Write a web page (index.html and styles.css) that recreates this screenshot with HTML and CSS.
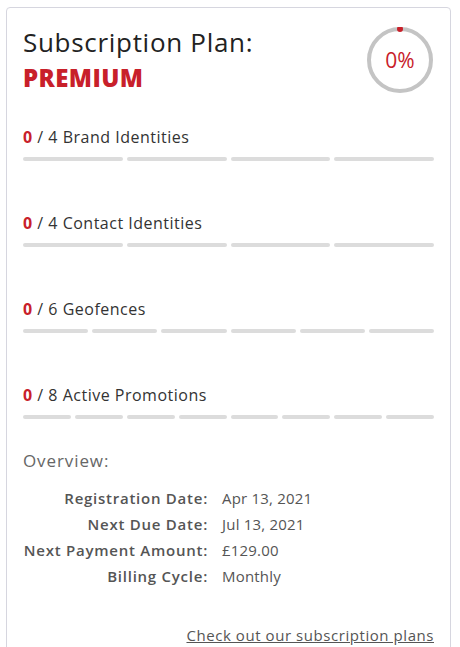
FILE: index.html
```html
<!DOCTYPE html>
<html>
<head>
<meta charset="utf-8">
<link rel="stylesheet" href="styles.css">
</head>
<body>
<div class="card">
  <div class="header">
    <div class="title">
      <div class="plan-label">Subscription Plan:</div>
      <div class="plan-name">PREMIUM</div>
    </div>
    <div class="gauge">
      <svg width="66" height="66" viewBox="0 0 66 66">
        <circle cx="33" cy="33" r="31" fill="none" stroke="#c4c4c4" stroke-width="4"/>
        <circle cx="33" cy="2" r="3" fill="#c8202a"/>
      </svg>
      <span class="gauge-text">0%</span>
    </div>
  </div>

  <div class="usage">
    <div class="usage-text"><span class="used">0</span> / 4 Brand Identities</div>
    <div class="bars"><span></span><span></span><span></span><span></span></div>
  </div>
  <div class="usage">
    <div class="usage-text"><span class="used">0</span> / 4 Contact Identities</div>
    <div class="bars"><span></span><span></span><span></span><span></span></div>
  </div>
  <div class="usage">
    <div class="usage-text"><span class="used">0</span> / 6 Geofences</div>
    <div class="bars"><span></span><span></span><span></span><span></span><span></span><span></span></div>
  </div>
  <div class="usage usage-last">
    <div class="usage-text"><span class="used">0</span> / 8 Active Promotions</div>
    <div class="bars"><span></span><span></span><span></span><span></span><span></span><span></span><span></span><span></span></div>
  </div>

  <div class="overview">Overview:</div>
  <div class="details">
    <div class="label">Registration Date:</div><div class="value">Apr 13, 2021</div>
    <div class="label">Next Due Date:</div><div class="value">Jul 13, 2021</div>
    <div class="label">Next Payment Amount:</div><div class="value">£129.00</div>
    <div class="label">Billing Cycle:</div><div class="value">Monthly</div>
  </div>

  <div class="link-row"><a href="#" class="plans-link">Check out our subscription plans</a></div>
</div>
</body>
</html>
```
FILE: styles.css
```css
html, body {
  margin: 0;
  padding: 0;
  background: #fff;
}
body {
  font-family: "Open Sans", "Noto Sans", sans-serif;
  color: #333;
}
.card {
  margin: 7px 9px 0 6px;
  border: 1px solid #d6d6df;
  border-radius: 4px;
  padding: 16px 16px 40px 16px;
}
.header {
  display: flex;
  justify-content: space-between;
  align-items: flex-start;
  margin-bottom: 29px;
}
.plan-label {
  font-size: 26px;
  line-height: 36px;
  color: #222;
  letter-spacing: 0.7px;
}
.plan-name {
  font-size: 24px;
  line-height: 36px;
  font-weight: 800;
  color: #c8202a;
  letter-spacing: 0.4px;
}
.gauge {
  position: relative;
  width: 66px;
  height: 66px;
  margin-top: 3px;
  margin-right: 1px;
}
.gauge svg {
  display: block;
}
.gauge-text {
  position: absolute;
  inset: 0;
  display: flex;
  align-items: center;
  justify-content: center;
  color: #c8202a;
  font-size: 21px;
}
.usage {
  margin-bottom: 50px;
}
.usage-last {
  margin-bottom: 30px;
}
.usage-text {
  font-size: 16px;
  line-height: 24px;
  color: #333;
  letter-spacing: 0.5px;
}
.used {
  color: #c8202a;
  font-weight: 700;
}
.bars {
  display: flex;
  gap: 4px;
  margin-top: 8px;
}
.bars span {
  flex: 1;
  height: 4px;
  border-radius: 2px;
  background: #dcdcdc;
}
.overview {
  font-size: 17px;
  line-height: 24px;
  color: #666;
  letter-spacing: 0.9px;
  margin-bottom: 12px;
}
.details {
  display: grid;
  grid-template-columns: 185px auto;
  column-gap: 14px;
  font-size: 15px;
  line-height: 26px;
  color: #555;
}
.label {
  text-align: right;
  font-weight: 600;
  letter-spacing: 0.75px;
  white-space: nowrap;
}
.value {
  letter-spacing: 0.2px;
}
.link-row {
  margin-top: 35px;
  text-align: right;
  line-height: 22px;
}
.plans-link {
  font-size: 15px;
  color: #555;
  letter-spacing: 0.56px;
  text-decoration: underline;
}
```
